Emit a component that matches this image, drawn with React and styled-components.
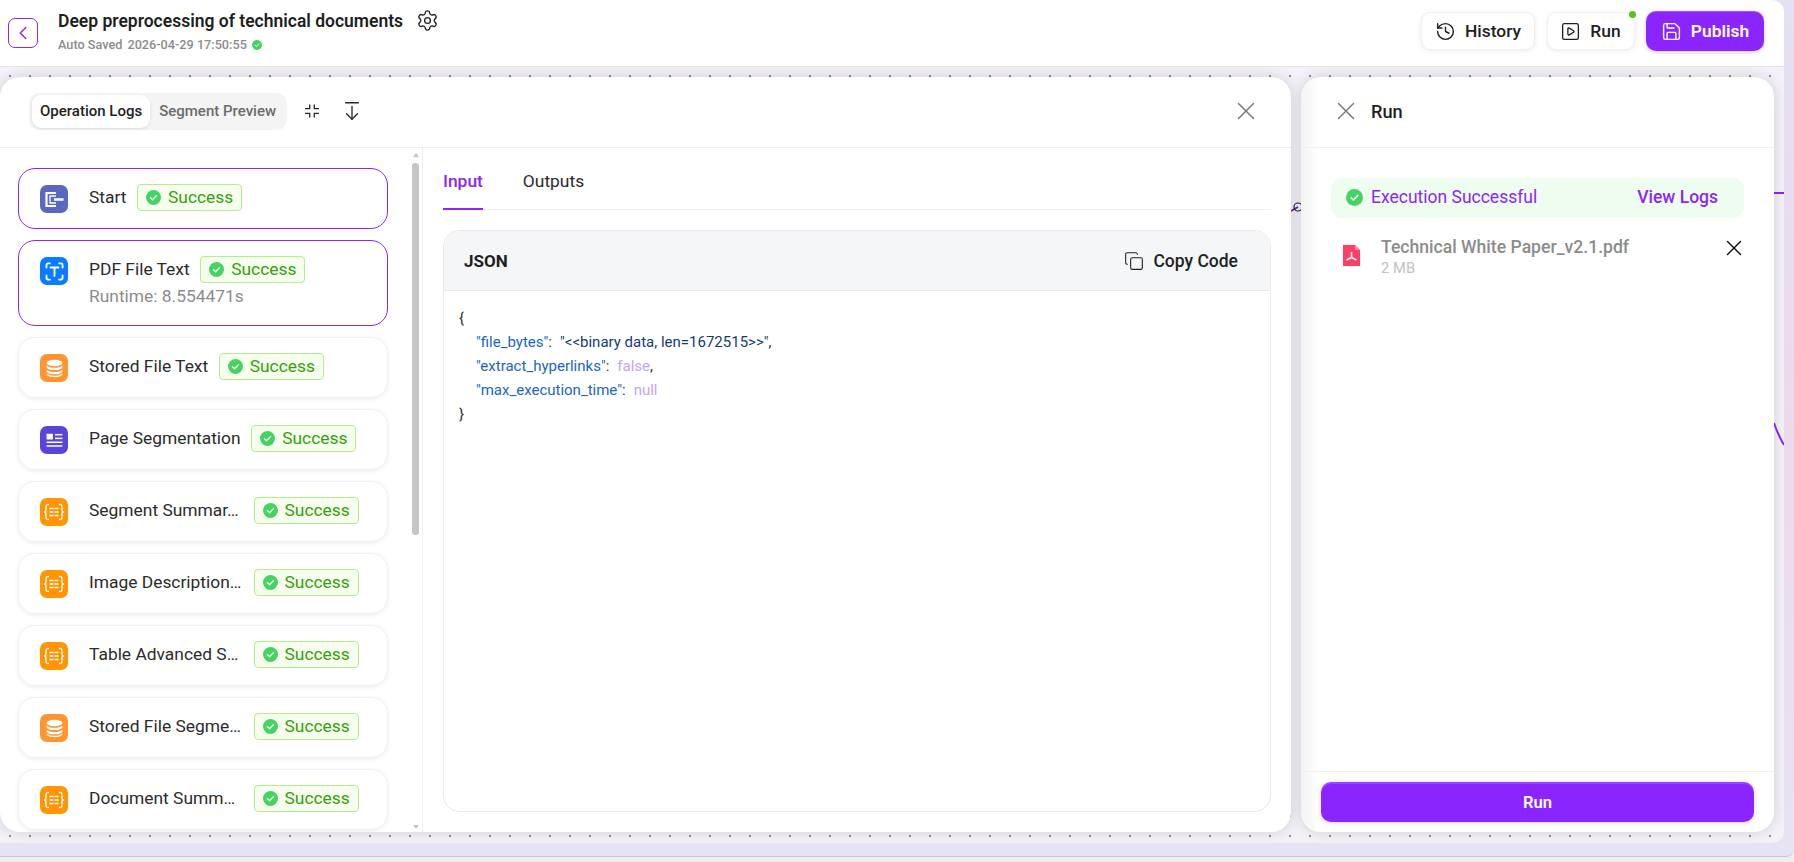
import React from 'react';
import styled, { createGlobalStyle } from 'styled-components';
import { ChevronLeft, Settings, History, SquarePlay, Save, X, Copy, ArrowDownFromLine } from 'lucide-react';

const purple = '#8a26fd';

const GlobalStyle = createGlobalStyle`
  html, body, #root { margin: 0; padding: 0; height: 100%; }
  body { font-family: Roboto, "Liberation Sans", sans-serif; overflow: hidden; background: #efefef; }
  * { box-sizing: border-box; }
`;

const Shell = styled.div`
  height: 862px;
  width: 1794px;
  display: flex;
  flex-direction: column;
`;

const Desktop = styled.div`
  height: 857px;
  padding: 0 10px 13px 0;
  background: linear-gradient(180deg, #e5e0f3 0%, #ecd9ec 50%, #e8e3f4 100%);
  border-bottom: 1px solid #c9c9cb;
  border-bottom-right-radius: 8px;
  display: flex;
  flex-direction: column;
`;

const Header = styled.header`
  height: 67px;
  flex: none;
  background: #fff;
  border-bottom: 1px solid #e3e3e8;
  border-top-right-radius: 12px;
  display: flex;
  align-items: center;
  padding: 0 20px 0 8px;
`;

const BackButton = styled.button`
  width: 30px;
  height: 30px;
  padding: 0;
  margin: 0 20px 0 0;
  border: 1px solid ${purple};
  border-radius: 7px;
  background: #fff;
  color: ${purple};
  display: flex;
  align-items: center;
  justify-content: center;
`;

const TitleBlock = styled.div`
  display: flex;
  flex-direction: column;
  gap: 5px;
  margin-top: -4px;
`;

const TitleRow = styled.div`
  height: 22px;
  display: flex;
  align-items: center;
  gap: 13px;
  color: #222;
`;

const Title = styled.h1`
  margin: 0;
  font-size: 17.5px;
  line-height: 22px;
  font-weight: 600;
  color: #1f1f1f;
`;

const SavedRow = styled.div`
  display: flex;
  align-items: center;
  gap: 5px;
  font-size: 12.7px;
  line-height: 16px;
  font-weight: 500;
  color: #8c8c8c;
`;

const Actions = styled.div`
  margin-left: auto;
  margin-top: -4px;
  display: flex;
  align-items: center;
  gap: 11.5px;
`;

const ActionButton = styled.button`
  position: relative;
  height: 38px;
  width: ${(p) => p.$width}px;
  padding: 0;
  border: 1px solid #f0f0f0;
  border-radius: 9px;
  background: #fff;
  box-shadow: 0 1px 4px rgba(0, 0, 0, 0.08);
  font: 500 17.4px Roboto, sans-serif;
  color: #1f1f1f;
  display: flex;
  align-items: center;
  justify-content: center;
  gap: 9px;
`;

const PublishButton = styled(ActionButton)`
  height: 40px;
  border: none;
  border-radius: 10px;
  background: ${purple};
  box-shadow: 0 1px 4px rgba(80, 0, 160, 0.25), inset 0 1px 0 rgba(255, 255, 255, 0.2);
  color: #fff;
  font-weight: 600;
`;

const StatusDot = styled.span`
  position: absolute;
  top: -2px;
  right: -2px;
  width: 7px;
  height: 7px;
  border-radius: 50%;
  background: #52c41a;
`;

const Canvas = styled.main`
  position: relative;
  flex: 1;
  min-height: 0;
  display: flex;
  gap: 10px;
  padding: 10px 10px 11px 0;
  background-color: #f4f2f7;
  background-image: radial-gradient(circle, #8a8a8a 0.7px, transparent 1px);
  background-size: 20px 20px;
  background-position: 0 -1px;
  border-bottom-right-radius: 12px;
  overflow: hidden;
`;

const Wires = styled.svg`
  position: absolute;
  inset: 0;
  width: 100%;
  height: 100%;
`;

const Panel = styled.section`
  position: relative;
  background: #fff;
  border-radius: 20px;
  box-shadow: 0 0 14px rgba(30, 20, 50, 0.16);
  display: flex;
  flex-direction: column;
  overflow: hidden;
`;

const LogsPanel = styled(Panel)`
  width: 1291px;
`;

const RunPanel = styled(Panel)`
  width: 473px;
  &::before {
    content: '';
    position: absolute;
    top: 0;
    bottom: 0;
    left: 0;
    width: 18px;
    background: linear-gradient(90deg, #f3f3f4, rgba(255, 255, 255, 0));
    pointer-events: none;
  }
`;

const PanelHead = styled.div`
  height: 71px;
  flex: none;
  padding-bottom: 2px;
  border-bottom: 1px solid #efefef;
  display: flex;
  align-items: center;
`;

const LogsHead = styled(PanelHead)`
  padding-left: 29px;
  padding-right: 30px;
`;

const RunHead = styled(PanelHead)`
  padding-left: 30px;
  gap: 10px;
`;

const Segmented = styled.div`
  display: flex;
  align-items: center;
  gap: 1px;
  height: 37px;
  width: 258px;
  flex: none;
  padding: 0 3px;
  border-radius: 10px;
  background: #f4f4f5;
`;

const SegmentTab = styled.div`
  height: 33px;
  padding: 0 8px;
  flex: none;
  white-space: nowrap;
  border-radius: 9px;
  font-size: 15px;
  font-weight: 500;
  color: ${(p) => (p.$active ? '#1f1f1f' : '#6b6b6b')};
  background: ${(p) => (p.$active ? '#fff' : 'transparent')};
  box-shadow: ${(p) => (p.$active ? '0 1px 3px rgba(0,0,0,.1)' : 'none')};
  display: flex;
  align-items: center;
`;

const HeadIcons = styled.div`
  display: flex;
  align-items: center;
  gap: 21px;
  margin-left: 17px;
  color: #262626;
`;

const CloseSlot = styled.div`
  margin-left: auto;
  color: #7a7a7a;
  display: flex;
`;

const RunTitle = styled.h2`
  margin: 0;
  font-size: 18.2px;
  font-weight: 500;
  color: #1f1f1f;
`;

const LogsBody = styled.div`
  flex: 1;
  min-height: 0;
  display: flex;
`;

const NodeColumn = styled.div`
  width: 423px;
  flex: none;
  display: flex;
  border-right: 1px solid #efefef;
`;

const NodeList = styled.div`
  width: 412px;
  flex: none;
  padding: 20px 24px 0 18px;
  display: flex;
  flex-direction: column;
  gap: 11px;
  overflow: hidden;
`;

const Track = styled.div`
  width: 7px;
  flex: none;
  display: flex;
  flex-direction: column;
  align-items: center;
  padding: 5px 0 3px;
`;

const TrackArrow = styled.span`
  flex: none;
  width: 0;
  height: 0;
  border-left: 3.5px solid transparent;
  border-right: 3.5px solid transparent;
  ${(p) => (p.$down ? 'border-top: 4px solid #c4c4c4; margin-top: auto;' : 'border-bottom: 4px solid #c4c4c4;')}
`;

const Thumb = styled.span`
  flex: none;
  width: 7px;
  height: 372px;
  margin-top: 6px;
  border-radius: 3px;
  background: #c6c6c6;
`;

const NodeCard = styled.div`
  flex: none;
  width: 370px;
  padding: 13px 21px 16px;
  border: 1px solid ${(p) => (p.$active ? purple : '#f0f0f0')};
  border-radius: 17px;
  background: #fff;
  box-shadow: ${(p) => (p.$active ? 'none' : '0 1px 5px rgba(0, 0, 0, 0.07)')};
`;

const NodeRow = styled.div`
  height: 30px;
  display: flex;
  align-items: center;
`;

const NodeIcon = styled.span`
  flex: none;
  width: 28px;
  height: 28px;
  margin: 4px 21px 0 0;
  border-radius: 7px;
  background: ${(p) => p.$bg};
  display: flex;
  align-items: center;
  justify-content: center;
`;

const NodeName = styled.span`
  flex: none;
  width: ${(p) => (p.$truncated ? '154px' : 'auto')};
  white-space: nowrap;
  font-size: 17.4px;
  color: #2b2b2b;
`;

const Badge = styled.span`
  flex: none;
  height: 27px;
  margin-left: 10.5px;
  padding: 0 8px;
  border: 1px solid #b7eb8f;
  border-radius: 4px;
  background: #f6ffed;
  color: #389e0d;
  font-size: 17.4px;
  display: flex;
  align-items: center;
  gap: 7px;
`;

const Runtime = styled.div`
  margin: 2px 0 3px 49px;
  height: 20px;
  line-height: 20px;
  font-size: 17.4px;
  color: #8c8c8c;
`;

const DetailColumn = styled.div`
  flex: 1;
  min-width: 0;
  padding: 0 20px 20px;
  display: flex;
  flex-direction: column;
`;

const DetailTabs = styled.div`
  height: 62px;
  flex: none;
  display: flex;
  gap: 40px;
  border-bottom: 1px solid #efefef;
`;

const DetailTab = styled.div`
  height: 62px;
  padding-top: 6px;
  display: flex;
  align-items: center;
  font-size: 17.4px;
  font-weight: ${(p) => (p.$active ? 500 : 400)};
  color: ${(p) => (p.$active ? purple : '#2b2b2b')};
  border-bottom: 2px solid ${(p) => (p.$active ? purple : 'transparent')};
`;

const CodeBox = styled.div`
  flex: 1;
  min-height: 0;
  margin-top: 20px;
  border: 1px solid #e9e9ec;
  border-radius: 16px;
  overflow: hidden;
  display: flex;
  flex-direction: column;
`;

const CodeHead = styled.div`
  height: 60px;
  flex: none;
  padding: 0 32px 0 20px;
  background: #f5f6f8;
  border-bottom: 1px solid #e9e9ec;
  display: flex;
  align-items: center;
  justify-content: space-between;
  color: #1f1f1f;
`;

const CodeLabel = styled.span`
  font-size: 17px;
  font-weight: 700;
`;

const CopyButton = styled.span`
  display: flex;
  align-items: center;
  gap: 9px;
  font-size: 17.5px;
  font-weight: 500;
`;

const CodeBody = styled.div`
  padding: 15px;
  font-size: 15px;
  color: #333;
`;

const CodeLine = styled.div`
  height: 24px;
  line-height: 24px;
  white-space: pre;
  padding-left: ${(p) => (p.$nested ? '17px' : '0')};
`;

const JsonKey = styled.span`
  color: #1a66c4;
`;

const JsonString = styled.span`
  color: #143c73;
  margin-left: 8px;
`;

const JsonLiteral = styled.span`
  color: #c3a5f7;
  margin-left: 8px;
`;

const RunBody = styled.div`
  flex: 1;
  min-height: 0;
  padding: 30px 30px 0;
`;

const ResultBar = styled.div`
  height: 40px;
  padding: 0 26px 2px 15px;
  border-radius: 11px;
  background: #effdf0;
  color: ${purple};
  font-size: 17.5px;
  display: flex;
  align-items: center;
  gap: 8px;
`;

const ViewLogs = styled.span`
  margin-left: auto;
  font-weight: 500;
`;

const FileRow = styled.div`
  display: flex;
  padding: 17px 0 0 12px;
`;

const FileGlyph = styled.span`
  flex: none;
  margin: 10px 21px 0 0;
  display: flex;
`;

const FileText = styled.div`
  flex: 1;
  min-width: 0;
`;

const FileName = styled.div`
  height: 24px;
  line-height: 24px;
  font-size: 17.6px;
  font-weight: 500;
  color: #8c8c8c;
`;

const FileSize = styled.div`
  height: 18px;
  line-height: 18px;
  font-size: 14.8px;
  color: #c2c2c2;
`;

const FileRemove = styled.span`
  flex: none;
  margin-right: -3px;
  height: 26px;
  color: #111;
  display: flex;
`;

const RunFoot = styled.div`
  height: 61px;
  flex: none;
  padding: 10px 20px;
  border-top: 1px solid #efefef;
`;

const RunButton = styled.button`
  width: 100%;
  height: 40px;
  border: none;
  border-radius: 10px;
  background: ${purple};
  box-shadow: 0 1px 5px rgba(80, 0, 160, 0.2), inset 0 2px 0 rgba(255, 255, 255, 0.15);
  color: #fff;
  font: 600 16.6px Roboto, sans-serif;
`;

function CheckDot({ size }) {
  return (
    <svg width={size} height={size} viewBox="0 0 16 16" style={{ flex: 'none' }}>
      <circle cx="8" cy="8" r="8" fill="#48d264" />
      <path d="M4.8 8.2l2.2 2.2 4.2-4.4" fill="none" stroke="#fff" strokeWidth="1.4" strokeLinecap="round" strokeLinejoin="round" />
    </svg>
  );
}

function ShrinkIcon() {
  return (
    <svg width="16" height="14" viewBox="0 0 16 14" fill="none" stroke="currentColor" strokeWidth="1.300">
      <path d="M5.700 0.500V4.700H1M10.300 0.500V4.700H15M5.700 13.500V9.300H1M10.300 13.500V9.300H15" />
    </svg>
  );
}

function StartGlyph() {
  return (
    <svg width="28" height="28" viewBox="0 0 28 28" fill="none" stroke="#fff">
      <path d="M16 8H6.500v13H16" strokeWidth="2.200" />
      <path d="M16 11H10v7h6" strokeWidth="1.300" />
      <path d="M14 14.500h9.500" strokeWidth="2.400" />
    </svg>
  );
}

function ScanTextGlyph() {
  return (
    <svg width="23" height="23" viewBox="0 0 20 20" fill="none" stroke="#fff" strokeWidth="1.600" strokeLinecap="round">
      <path d="M3 6.500V4.500A1.500 1.500 0 0 1 4.500 3H6M14 3h1.500A1.500 1.500 0 0 1 17 4.500V6.500M17 13.500v2a1.500 1.500 0 0 1-1.500 1.500H14M6 17H4.500A1.500 1.500 0 0 1 3 15.500v-2" />
      <path d="M6.500 6.500h7M10 6.500v7.500" />
    </svg>
  );
}

function DatabaseGlyph() {
  return (
    <svg width="19" height="19" viewBox="0 0 18 18" fill="#fff">
      <ellipse cx="9" cy="3.800" rx="7.500" ry="3" />
      <path d="M1.500 6.200v1.300c0 1.700 3.400 3 7.500 3s7.500-1.300 7.500-3V6.200c-1.500 1.500-4.300 2.200-7.500 2.200S3 7.700 1.500 6.200z" />
      <path d="M1.500 10.200v1.300c0 1.700 3.400 3 7.500 3s7.500-1.300 7.500-3v-1.300c-1.500 1.500-4.300 2.200-7.500 2.200s-6-.7-7.500-2.200z" />
      <path d="M1.500 13.700v.6c0 1.700 3.400 3 7.500 3s7.500-1.300 7.500-3v-.6c-1.500 1.500-4.300 2.200-7.500 2.200s-6-.7-7.500-2.200z" />
    </svg>
  );
}

function PageGlyph() {
  return (
    <svg width="19" height="19" viewBox="0 0 18 18" fill="#fff">
      <rect x="1.500" y="2.500" width="6" height="5.500" rx="0.600" />
      <rect x="9.500" y="2.800" width="7" height="1.400" />
      <rect x="9.500" y="6.300" width="7" height="1.400" />
      <rect x="1.500" y="10" width="15" height="1.400" />
      <rect x="1.500" y="13.500" width="15" height="1.400" />
    </svg>
  );
}

function BracesGlyph() {
  return (
    <svg width="22" height="20" viewBox="0 0 22 20" fill="none" stroke="#fff" strokeWidth="1.300" strokeLinecap="round">
      <path d="M5.500 2.500H5a2 2 0 0 0-2 2V8a2 2 0 0 1-2 2 2 2 0 0 1 2 2v3.500a2 2 0 0 0 2 2h.5" />
      <path d="M16.500 2.500h.5a2 2 0 0 1 2 2V8a2 2 0 0 0 2 2 2 2 0 0 0-2 2v3.500a2 2 0 0 1-2 2h-.5" />
      <path d="M6.500 6.500h4M11.500 6.500h4M6.500 10h4M11.500 10h4M6.500 13.500h4M11.500 13.500h4" strokeLinecap="butt" strokeWidth="1.700" />
    </svg>
  );
}

function PdfGlyph() {
  return (
    <svg width="17" height="21" viewBox="0 0 17 21">
      <path d="M0 0h12l5 5v16H0z" fill="#fb3f66" />
      <path d="M12 0l5 5h-5z" fill="#fd8ba3" />
      <path d="M8.500 7.500v5M8.500 12.500l-4.500 2.200M8.500 12.500l4.500 2.200" stroke="#fff" strokeWidth="1.600" fill="none" strokeLinecap="round" />
    </svg>
  );
}

const nodes = [
  { name: 'Start', bg: '#5a68c0', glyph: <StartGlyph />, active: true },
  { name: 'PDF File Text', bg: '#0a7cff', glyph: <ScanTextGlyph />, active: true, runtime: 'Runtime: 8.554471s' },
  { name: 'Stored File Text', bg: '#ff9431', glyph: <DatabaseGlyph /> },
  { name: 'Page Segmentation', bg: '#5a45dc', glyph: <PageGlyph /> },
  { name: 'Segment Summar…', bg: '#ff9500', glyph: <BracesGlyph />, truncated: true },
  { name: 'Image Description…', bg: '#ff9500', glyph: <BracesGlyph />, truncated: true },
  { name: 'Table Advanced S…', bg: '#ff9500', glyph: <BracesGlyph />, truncated: true },
  { name: 'Stored File Segme…', bg: '#ff9431', glyph: <DatabaseGlyph />, truncated: true },
  { name: 'Document Summ…', bg: '#ff9500', glyph: <BracesGlyph />, truncated: true },
];

export default function App() {
  return (
    <>
      <GlobalStyle />
      <Shell>
        <Desktop>
          <Header>
            <BackButton aria-label="Back">
              <ChevronLeft size={22} strokeWidth={1.6} />
            </BackButton>
            <TitleBlock>
              <TitleRow>
                <Title>Deep preprocessing of technical documents</Title>
                <Settings size={23} strokeWidth={1.4} />
              </TitleRow>
              <SavedRow>
                <span>Auto Saved</span>
                <span>2026-04-29 17:50:55</span>
                <CheckDot size={10} />
              </SavedRow>
            </TitleBlock>
            <Actions>
              <ActionButton $width={114}>
                <History size={21} strokeWidth={1.6} />
                History
              </ActionButton>
              <ActionButton $width={88}>
                <SquarePlay size={21} strokeWidth={1.5} />
                Run
                <StatusDot />
              </ActionButton>
              <PublishButton $width={118}>
                <Save size={21} strokeWidth={1.6} />
                Publish
              </PublishButton>
            </Actions>
          </Header>
          <Canvas>
            <Wires aria-hidden="true">
              <path d="M1291 144l7-4" stroke="#6a1fd0" strokeWidth="2" fill="none" />
              <circle cx="1298" cy="140" r="4" stroke="#222" strokeWidth="1.200" fill="none" />
              <path d="M1774 126h10" stroke={purple} strokeWidth="2" />
              <path d="M1774 356q4 12 10 22" stroke={purple} strokeWidth="2" fill="none" />
            </Wires>
            <LogsPanel>
              <LogsHead>
                <Segmented>
                  <SegmentTab $active>Operation Logs</SegmentTab>
                  <SegmentTab>Segment Preview</SegmentTab>
                </Segmented>
                <HeadIcons>
                  <ShrinkIcon />
                  <ArrowDownFromLine size={22} strokeWidth={1.400} />
                </HeadIcons>
                <CloseSlot>
                  <X size={30} strokeWidth={1.200} />
                </CloseSlot>
              </LogsHead>
              <LogsBody>
                <NodeColumn>
                  <NodeList>
                    {nodes.map((node) => (
                      <NodeCard key={node.name} $active={node.active}>
                        <NodeRow>
                          <NodeIcon $bg={node.bg}>{node.glyph}</NodeIcon>
                          <NodeName $truncated={node.truncated}>{node.name}</NodeName>
                          <Badge>
                            <CheckDot size={15} />
                            Success
                          </Badge>
                        </NodeRow>
                        {node.runtime && <Runtime>{node.runtime}</Runtime>}
                      </NodeCard>
                    ))}
                  </NodeList>
                  <Track>
                    <TrackArrow />
                    <Thumb />
                    <TrackArrow $down />
                  </Track>
                </NodeColumn>
                <DetailColumn>
                  <DetailTabs>
                    <DetailTab $active>Input</DetailTab>
                    <DetailTab>Outputs</DetailTab>
                  </DetailTabs>
                  <CodeBox>
                    <CodeHead>
                      <CodeLabel>JSON</CodeLabel>
                      <CopyButton>
                        <Copy size={20} strokeWidth={1.300} />
                        Copy Code
                      </CopyButton>
                    </CodeHead>
                    <CodeBody>
                      <CodeLine>{'{'}</CodeLine>
                      <CodeLine $nested>
                        <JsonKey>"file_bytes"</JsonKey>:<JsonString>"&lt;&lt;binary data, len=1672515&gt;&gt;"</JsonString>,
                      </CodeLine>
                      <CodeLine $nested>
                        <JsonKey>"extract_hyperlinks"</JsonKey>:<JsonLiteral>false</JsonLiteral>,
                      </CodeLine>
                      <CodeLine $nested>
                        <JsonKey>"max_execution_time"</JsonKey>:<JsonLiteral>null</JsonLiteral>
                      </CodeLine>
                      <CodeLine>{'}'}</CodeLine>
                    </CodeBody>
                  </CodeBox>
                </DetailColumn>
              </LogsBody>
            </LogsPanel>
            <RunPanel>
              <RunHead>
                <X size={30} strokeWidth={1.200} color="#7a7a7a" />
                <RunTitle>Run</RunTitle>
              </RunHead>
              <RunBody>
                <ResultBar>
                  <CheckDot size={17} />
                  Execution Successful
                  <ViewLogs>View Logs</ViewLogs>
                </ResultBar>
                <FileRow>
                  <FileGlyph>
                    <PdfGlyph />
                  </FileGlyph>
                  <FileText>
                    <FileName>Technical White Paper_v2.1.pdf</FileName>
                    <FileSize>2 MB</FileSize>
                  </FileText>
                  <FileRemove>
                    <X size={26} strokeWidth={1.300} />
                  </FileRemove>
                </FileRow>
              </RunBody>
              <RunFoot>
                <RunButton>Run</RunButton>
              </RunFoot>
            </RunPanel>
          </Canvas>
        </Desktop>
      </Shell>
    </>
  );
}
